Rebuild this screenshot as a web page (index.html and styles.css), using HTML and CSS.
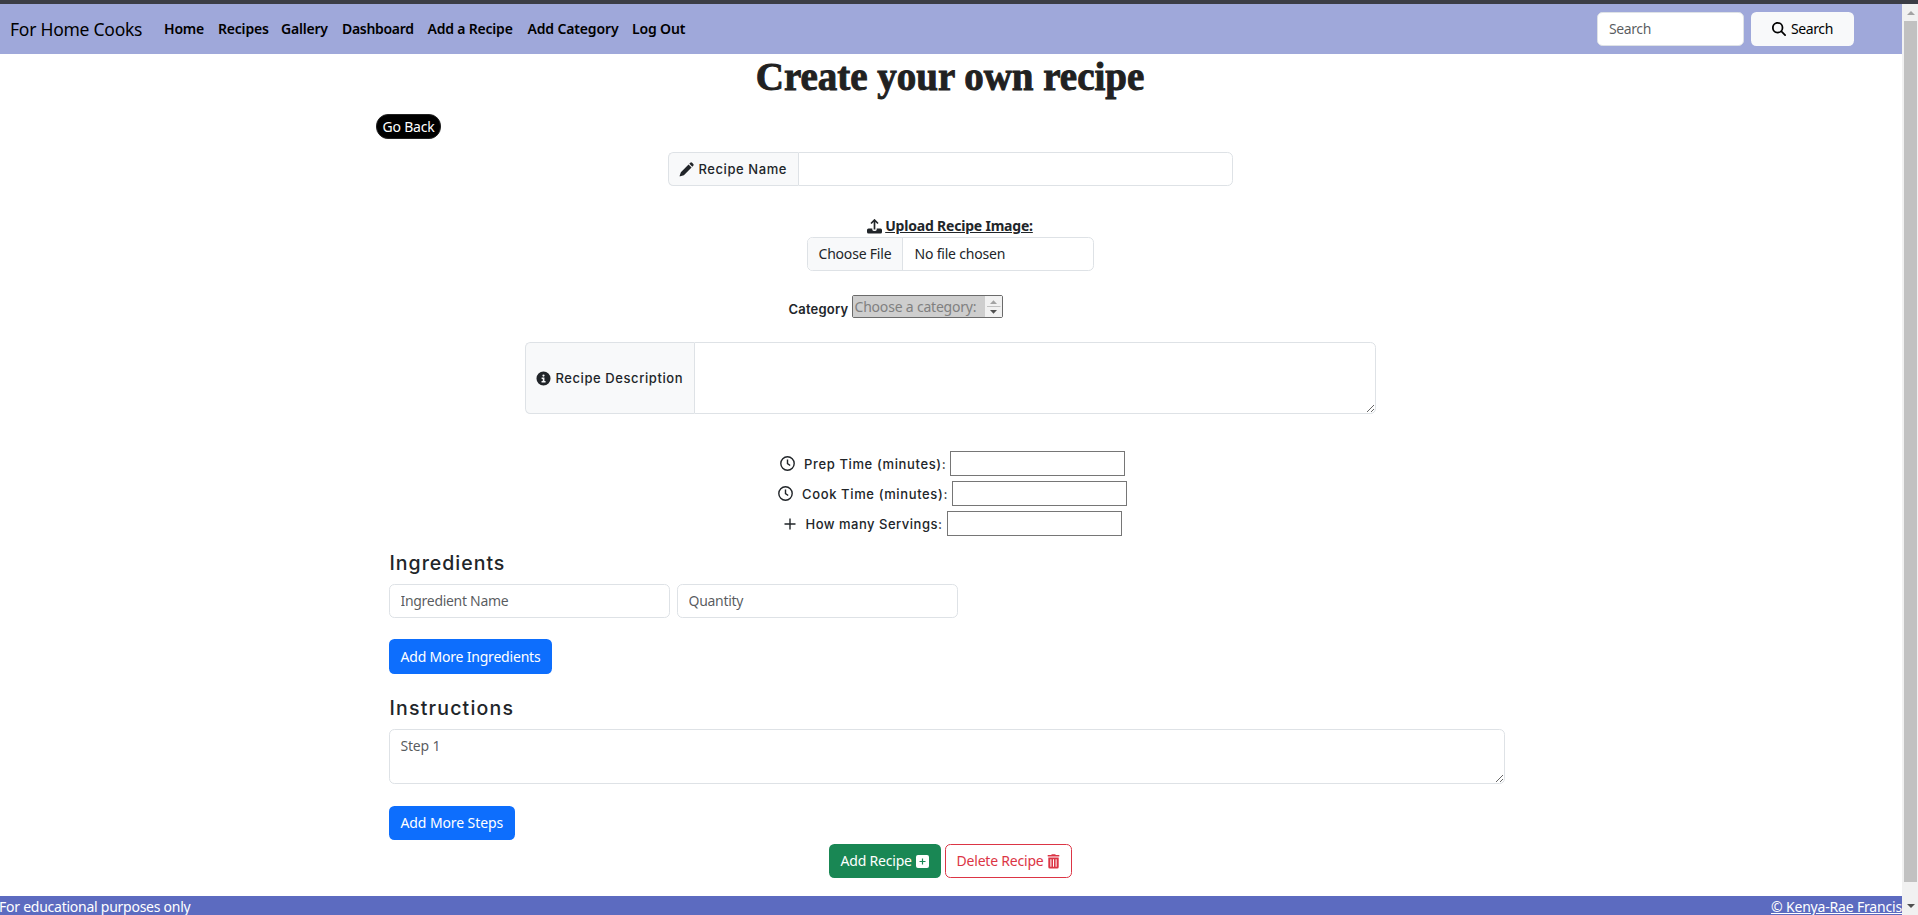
FILE: index.html
```html
<!DOCTYPE html>
<html lang="en">
<head>
<meta charset="utf-8">
<title>For Home Cooks</title>
<link rel="stylesheet" href="styles.css">
</head>
<body>
<div class="edge"></div>
<div class="window">
<div class="page">
  <nav class="navbar">
    <a class="brand">For Home Cooks</a>
    <ul class="links">
      <li>Home</li><li>Recipes</li><li>Gallery</li><li>Dashboard</li><li>Add a Recipe</li><li>Add Category</li><li>Log Out</li>
    </ul>
    <div class="search">
      <input class="field search-field" placeholder="Search">
      <button class="btn light"><svg width="14" height="14" viewBox="0 0 512 512"><path d="M416 208c0 45.9-14.9 88.3-40 122.7L502.6 457.4c12.5 12.5 12.5 32.8 0 45.3s-32.8 12.5-45.3 0L330.7 376c-34.4 25.2-76.8 40-122.7 40C93.1 416 0 322.9 0 208S93.1 0 208 0S416 93.1 416 208zM208 352a144 144 0 1 0 0-288 144 144 0 1 0 0 288z"/></svg>Search</button>
    </div>
  </nav>
  <main class="main">
    <h1 class="title">Create your own recipe</h1>
    <div class="back-row"><a class="back">Go Back</a></div>

    <div class="group name-group">
      <label class="addon"><svg width="15" height="15" viewBox="0 0 16 16"><path d="M10.2 2.6 13.4 5.8 5.2 14 1.3 15.3Q.5 15.5.7 14.7L2 10.8zM11 1.8 12 .8Q13-.1 14 .8L15.200 2Q16.100 3 15.200 4L14.200 5z"/></svg><span>Recipe Name</span></label>
      <input class="field joined">
    </div>

    <label class="upload-label"><svg width="15" height="15" viewBox="0 0 15 15"><path d="M7.500 1v9.500M4 4.500 7.500 1 11 4.500" fill="none" stroke="currentColor" stroke-width="1.700"/><path d="M1.500 9.500H5.300V10.500Q5.300 12 7.500 12T9.700 10.500V9.500H13.500Q15 9.500 15 11V13Q15 14.500 13.500 14.500H1.500Q0 14.500 0 13V11Q0 9.500 1.500 9.500z"/></svg><span>Upload Recipe Image:</span></label>
    <div class="file"><span class="choose">Choose File</span><span class="chosen">No file chosen</span></div>

    <div class="category">
      <label class="label strong">Category</label>
      <div class="listbox"><span class="option">Choose a category:</span><span class="spin"><svg width="17" height="21" viewBox="0 0 17 21"><path d="M5 8 8.500 4.200 12 8z" fill="#a3a3a3"/><path d="M2 10.500H15.500" stroke="#c1c1c1"/><path d="M5 14H12L8.500 17.800z" fill="#505050"/></svg></span></div>
    </div>

    <div class="group desc-group">
      <label class="addon"><svg width="15" height="15" viewBox="0 0 16 16"><path fill-rule="evenodd" d="M8 .5a7.500 7.500 0 1 1 0 15 7.500 7.500 0 0 1 0-15zM8 3.600a1.200 1.200 0 1 0 0 2.400 1.200 1.200 0 0 0 0-2.400zM6 7V8.500H7.200V10.700H5.900V12.200H10.200V10.700H9V7z"/></svg><span>Recipe Description</span></label>
      <textarea class="field joined"></textarea>
    </div>

    <div class="numbers">
      <div class="number prep"><svg class="clock" width="15" height="15" viewBox="0 0 15 15"><circle cx="7.500" cy="7.500" r="6.700"/><path d="M7.500 3.500V7.700L10.200 9.500"/></svg><label class="label">Prep Time (minutes):</label><input></div>
      <div class="number cook"><svg class="clock" width="15" height="15" viewBox="0 0 15 15"><circle cx="7.500" cy="7.500" r="6.700"/><path d="M7.500 3.500V7.700L10.200 9.500"/></svg><label class="label">Cook Time (minutes):</label><input></div>
      <div class="number serv"><svg class="clock" width="12" height="12" viewBox="0 0 12 12"><path d="M6 .5V11.500M.5 6H11.500"/></svg><label class="label">How many Servings:</label><input></div>
    </div>

    <section class="wide">
      <h2 class="heading">Ingredients</h2>
      <div class="pair"><input class="field" placeholder="Ingredient Name"><input class="field" placeholder="Quantity"></div>
      <button class="btn primary more-ing">Add More Ingredients</button>
      <h2 class="heading second">Instructions</h2>
      <textarea class="field step" placeholder="Step 1"></textarea>
      <button class="btn primary more-step">Add More Steps</button>
    </section>

    <div class="actions">
      <button class="btn success">Add Recipe<svg width="13" height="13" viewBox="0 0 13 13"><path fill-rule="evenodd" d="M2 0H11Q13 0 13 2V11Q13 13 11 13H2Q0 13 0 11V2Q0 0 2 0zM5.900 3.500V5.900H3.500V7.100H5.900V9.500H7.100V7.100H9.500V5.900H7.100V3.500z"/></svg></button>
      <button class="btn danger">Delete Recipe<svg width="13" height="15" viewBox="0 0 13 15"><path fill-rule="evenodd" d="M4.300.9 4.700.2H8.300L8.700.9H12.300V2.600H.7V.9zM1.300 3.400H11.700V13Q11.700 14.600 10.200 14.600H2.800Q1.300 14.600 1.300 13zM3.400 5.200V12.700H4.400V5.200zM6 5.200V12.700H7V5.200zM8.600 5.200V12.700H9.600V5.200z"/></svg></button>
    </div>
  </main>
  <footer class="footer"><span>For educational purposes only</span><a>© Kenya-Rae Francis</a></footer>
</div>
<div class="scrollbar"><i class="arrow up"></i><i class="thumb"></i><i class="arrow down"></i></div>
</div>
</body>
</html>
```
FILE: styles.css
```css
* { box-sizing: border-box; }
html, body { height: 100%; }
body {
  margin: 0;
  overflow: hidden;
  display: flex;
  flex-direction: column;
  background: #fff;
  color: #212529;
  font: 14px/22px "Noto Sans", sans-serif;
  letter-spacing: -.2px;
}
svg { fill: currentColor; flex: none; }
input, textarea, button { font: inherit; letter-spacing: inherit; color: inherit; margin: 0; }
.edge { height: 4px; background: #3b3d45; flex: none; }
.window { display: flex; flex: 1; min-height: 0; }
.page { flex: 1; min-width: 0; display: flex; flex-direction: column; }

.navbar { height: 50px; flex: none; background: #9fa8da; color: #000; display: flex; align-items: center; padding-left: 10px; padding-bottom: 1px; }
.brand { width: 154px; font-size: 17.5px; letter-spacing: -.25px; }
.links { display: grid; grid-template-columns: 54px 63px 61px 85.500px 100px 104.500px 60px; margin: 0; padding: 0; list-style: none; font-weight: 600; white-space: nowrap; }
.links li:nth-child(4) { letter-spacing: -.3px; }
.links li:nth-child(6), .links li:nth-child(7) { letter-spacing: -.15px; }
.search { display: flex; gap: 7px; margin-left: auto; margin-right: 48px; letter-spacing: -.4px; }

.field { border: 1px solid #dee2e6; border-radius: 5.400px; background: #fff; height: 34px; padding: 0 10px; display: block; outline: 0; }
.field::placeholder { color: rgba(33, 37, 41, .75); opacity: 1; }
.search-field { width: 147px; padding: 0 11px; }
.btn { border: 1px solid transparent; border-radius: 5.400px; height: 34px; padding: 0 11px; display: flex; align-items: center; white-space: nowrap; }
.light { width: 103px; background: #f8f9fa; justify-content: center; gap: 5px; }

.main { flex: none; height: 842px; display: flex; flex-direction: column; align-items: center; padding-right: 2px; }
.title { margin: 0; font: 700 39px/46px "Liberation Serif", serif; letter-spacing: -.02px; color: #212121; -webkit-text-stroke: .9px #212121; height: 46px; }
.back-row { width: 1150px; margin: 14px 0 0 2px; }
.back { display: flex; align-items: center; justify-content: center; width: 65px; height: 25px; border: 1px solid #222; border-radius: 12px; background: #000; color: #fff; }

.group { display: flex; }
.addon { display: flex; align-items: center; gap: 5px; padding-left: 10px; flex: none; background: #f8f9fa; border: 1px solid #dee2e6; border-right: 0; border-radius: 5.400px 0 0 5.400px; font: 500 13px/20px Inter, sans-serif; letter-spacing: .58px; }
.addon span { padding-bottom: 1px; }
.joined { flex: 1; border-radius: 0 5.400px 5.400px 0; height: auto; }
.name-group { width: 565px; height: 34px; margin-top: 13px; }
.name-group .addon { width: 130px; }
.desc-group { width: 851px; height: 72px; margin-top: 24px; }
.desc-group .addon { width: 169px; }

.upload-label { display: flex; align-items: center; gap: 3px; height: 22px; margin-top: 29px; font-weight: 700; }
.upload-label span { text-decoration: underline; }
.file { display: flex; width: 287px; height: 34px; line-height: 32px; border: 1px solid #dee2e6; border-radius: 5.400px; overflow: hidden; }
.choose { width: 95px; padding-left: 11px; background: #f8f9fa; border-right: 1px solid #dee2e6; }
.chosen { padding-left: 12px; }

.label { font: 500 13px/20px Inter, sans-serif; letter-spacing: .63px; white-space: nowrap; }
.category { display: flex; width: 214px; height: 23px; margin: 24px 109px 0 0; justify-content: space-between; }
.category .label { padding-top: 4px; letter-spacing: .2px; font-weight: 600; }
.listbox { display: flex; width: 151px; height: 23px; border: 1px solid #6b6b6b; border-radius: 2px; line-height: 22px; }
.option { flex: 1; padding-left: 2px; background: #cecece; color: #808080; white-space: nowrap; }
.spin { width: 17px; height: 21px; background: #f1f1f1; }
.spin svg { display: block; }

.numbers { display: flex; flex-direction: column; gap: 5px; align-items: center; margin: 37px 0 0 5px; }
.number { display: flex; align-items: center; height: 25px; }
.number input { width: 175px; height: 25px; border: 1px solid #767676; padding: 0; margin-left: auto; }
.clock { fill: none; stroke: currentColor; stroke-width: 1.400; }
.clock + .label { margin-left: 9px; padding-top: 1px; }
.prep { width: 345px; }
.cook { width: 349px; }
.serv { width: 338px; }
.serv .clock + .label { margin-left: 10px; letter-spacing: .5px; }

.wide { width: 1116px; margin-left: -7px; }
.heading { height: 48px; margin: 0; padding: 14px 0 0 1px; font: 500 19.500px/26px Inter, sans-serif; letter-spacing: 1px; }
.heading.second { height: 55px; padding-top: 21px; letter-spacing: 1.200px; }
.pair { display: flex; gap: 7px; }
.pair .field { width: 281px; padding: 0 11px 1px; }
.pair .field::placeholder { letter-spacing: -.3px; }
.primary { background: #0d6efd; color: #fff; }
.more-ing { margin-top: 21px; height: 35px; width: 163px; }
.step { width: 100%; height: 55px; padding: 5px 11px; }
.more-step { margin-top: 22px; width: 126px; letter-spacing: -.1px; }

.actions { display: flex; gap: 4px; margin-top: 4px; }
.success { width: 112px; background: #198754; color: #fff; justify-content: space-between; }
.danger { width: 127px; background: #fff; color: #dc3545; border-color: #dc3545; justify-content: space-between; }

.footer { flex: 1; display: flex; justify-content: space-between; background: #5c6bc0; color: #fff; overflow: hidden; letter-spacing: -.25px; }
.footer span { margin-left: -1px; }
.footer a { text-decoration: underline; letter-spacing: -.18px; }

.scrollbar { width: 16px; background: #f1f1f1; display: flex; flex-direction: column; align-items: center; padding: 7px 0 7px 1px; }
.arrow { border: 4px solid transparent; }
.up { border-top: 0; border-bottom-color: #a3a3a3; }
.down { border-bottom: 0; border-top-color: #505050; }
.thumb { width: 13px; height: 861px; margin: 6px 0 auto; background: #c1c1c1; }
```
